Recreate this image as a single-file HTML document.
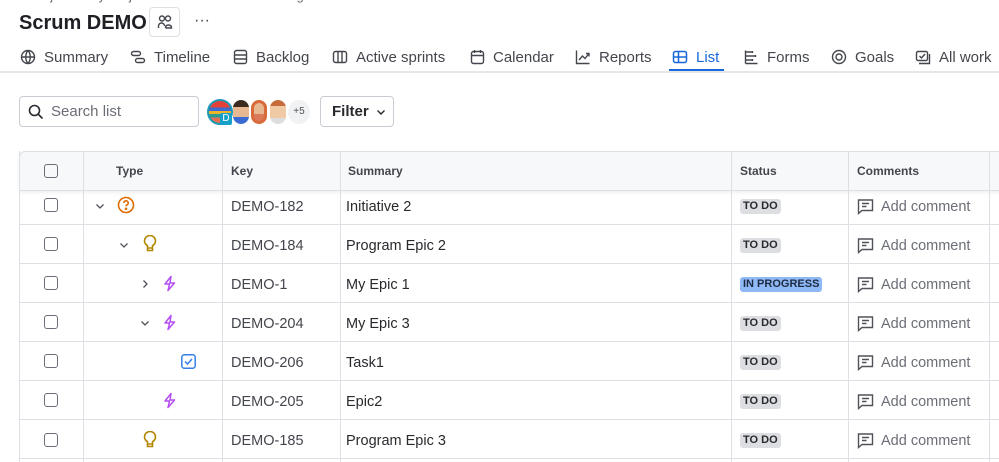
<!DOCTYPE html>
<html><head><meta charset="utf-8"><style>
*{box-sizing:border-box;margin:0;padding:0}
body{width:999px;height:462px;overflow:hidden;background:#fff;font-family:"Liberation Sans",sans-serif;color:#292a2e;position:relative}
.abs{position:absolute}
.tab{position:absolute;top:47px;height:20px;display:flex;align-items:center;font-size:15px;color:#44464d}
.tab svg{margin-right:8px}
.cb{position:absolute;left:44px;width:14px;height:14px;border:1.5px solid #6b6e76;border-radius:3px}
.vl{position:absolute;top:151px;bottom:0;width:1px;background:#dcdfe4}
.r{position:absolute;left:19px;width:980px;height:39px;border-bottom:1px solid #dcdfe4}
.c{position:absolute;top:2px;height:38px;display:flex;align-items:center;font-size:14.5px;white-space:nowrap}
.k{left:212px;color:#44464d}
.s{left:327px;color:#292a2e}
.st{left:721px;top:1px}
.cm{left:838px;color:#6b6e76;font-size:14.5px}
.cm svg{margin-right:7px;margin-top:-2px}
.lz{background:#dddee1;color:#292a2e;font-size:11px;font-weight:bold;padding:1px 3px;border-radius:3px;line-height:13px}
.ip{background:#8fb8f6;color:#1c2b41}
</style></head><body>
<div class="abs" style="left:30px;top:-12px;font-size:13px;color:#6b6e76">Projects / My Projects / Scrum DEMO / Backlog / and more items here</div>
<div class="abs" style="left:19px;top:12px;font-size:20px;font-weight:bold;color:#1f2025">Scrum DEMO</div>
<div class="abs" style="left:149px;top:7px;width:31px;height:30px;border:1px solid #dcdfe4;border-radius:4px;display:flex;align-items:center;justify-content:center">
<svg width="16" height="16" viewBox="0 0 16 16" fill="none" stroke="#44464d" stroke-width="1.4"><circle cx="5" cy="4.5" r="2.5"/><circle cx="11" cy="4.5" r="2.5"/><path d="M1.5 14v-2a3 3 0 0 1 6 0M8.5 14c0-2 1-3 3-3s3 1 3 3H8.5"/></svg></div>
<div class="abs" style="left:194px;top:12px;font-size:16px;color:#44464d">···</div>

<div class="tab" style="left:20px"><svg width="16" height="16" viewBox="0 0 16 16" fill="none" stroke="#44464d" stroke-width="1.4"><circle cx="8" cy="8" r="6.5"/><path d="M1.5 8h13M8 1.5c-3 3.5-3 9.5 0 13M8 1.5c3 3.5 3 9.5 0 13"/></svg>Summary</div>
<div class="tab" style="left:130px"><svg width="16" height="16" viewBox="0 0 16 16" fill="none" stroke="#44464d" stroke-width="1.4"><rect x="1.5" y="2.5" width="9" height="4" rx="2"/><rect x="5.5" y="9.5" width="9" height="4" rx="2"/></svg>Timeline</div>
<div class="tab" style="left:233px"><svg width="15" height="16" viewBox="0 0 15 16" fill="none" stroke="#44464d" stroke-width="1.4"><rect x="1.5" y="1.5" width="12" height="13" rx="2"/><path d="M1.5 6h12M1.5 10h12"/></svg>Backlog</div>
<div class="tab" style="left:332px"><svg width="16" height="16" viewBox="0 0 16 16" fill="none" stroke="#44464d" stroke-width="1.4"><rect x="1.5" y="2.5" width="13" height="11" rx="2"/><path d="M6 2.5v11M10 2.5v11"/></svg>Active sprints</div>
<div class="tab" style="left:470px"><svg width="15" height="16" viewBox="0 0 15 16" fill="none" stroke="#44464d" stroke-width="1.4"><rect x="1.5" y="2.5" width="12" height="12" rx="2"/><path d="M1.5 6.5h12M4.5 1v3M10.5 1v3"/></svg>Calendar</div>
<div class="tab" style="left:575px"><svg width="16" height="16" viewBox="0 0 16 16" fill="none" stroke="#44464d" stroke-width="1.4"><path d="M1.5 1.5v13h13M4 11l3.5-4 2.5 2.5L14 4.5M11 4.5h3v3"/></svg>Reports</div>
<div class="tab" style="left:672px;color:#1868db"><svg width="16" height="16" viewBox="0 0 16 16" fill="none" stroke="#1868db" stroke-width="1.5"><rect x="1.5" y="2.5" width="13" height="11" rx="2"/><path d="M1.5 8h13M6.5 2.5v11"/></svg>List</div>
<div class="abs" style="left:669px;top:69px;width:55px;height:3px;background:#1868db"></div>
<div class="tab" style="left:744px"><svg width="15" height="16" viewBox="0 0 15 16" fill="none" stroke="#44464d" stroke-width="1.4"><path d="M1.5 1.5v13M1.5 3h7M1.5 7h10M1.5 11h7M1.5 14.5h12M8.5 2v2M11.5 6v2M8.5 10v2"/></svg>Forms</div>
<div class="tab" style="left:831px"><svg width="16" height="16" viewBox="0 0 16 16" fill="none" stroke="#44464d" stroke-width="1.4"><circle cx="8" cy="8" r="6.5"/><circle cx="8" cy="8" r="3"/></svg>Goals</div>
<div class="tab" style="left:915px"><svg width="16" height="16" viewBox="0 0 16 16" fill="none" stroke="#44464d" stroke-width="1.4"><rect x="1.5" y="2.5" width="11" height="9" rx="1.5"/><path d="M4 14.5h10.5V5M4.5 7l2 2 3.5-4"/></svg>All work</div>
<div class="abs" style="left:0;top:71px;width:999px;height:2px;background:#e6e7ea"></div>

<div class="abs" style="left:19px;top:96px;width:180px;height:31px;border:1px solid #c9ccd2;border-radius:4px;display:flex;align-items:center;padding-left:8px;font-size:15px;color:#6b6e76">
<svg width="16" height="16" viewBox="0 0 16 16" fill="none" stroke="#292a2e" stroke-width="1.6" style="margin-right:7px"><circle cx="6.5" cy="6.5" r="5"/><path d="M10.5 10.5l4 4"/></svg>Search list</div>
<div class="abs" style="left:207px;top:99px;width:26px;height:26px;border-radius:50%;border:2px solid #1d9ab8;background:linear-gradient(#e3423a 0 30%,#3b6bd2 30% 45%,#f0b429 45% 60%,#2a9d8f 60% 75%,#e76f51 75%)"></div>
<div class="abs" style="left:220px;top:113px;width:12px;height:12px;background:#16a0c8;color:#fff;font-size:10px;text-align:center;line-height:12px;border-radius:2px">D</div>
<div class="abs" style="left:233px;top:100px;width:16px;height:24px;border-radius:8px;background:linear-gradient(#3b2a20 0 30%,#e8b892 30% 70%,#3b6bd2 70%)"></div>
<div class="abs" style="left:251px;top:100px;width:16px;height:24px;border-radius:8px;background:linear-gradient(#e8b892 0 60%,#d97a5a 60%);border:3px solid #d96a3a"></div>
<div class="abs" style="left:270px;top:100px;width:16px;height:24px;border-radius:8px;background:linear-gradient(#c66b3a 0 25%,#f0c9a5 25% 75%,#ddd 75%)"></div>
<div class="abs" style="left:288px;top:100px;width:22px;height:24px;border-radius:50%;background:#f1f2f4;font-size:10px;color:#505258;text-align:center;line-height:24px">+5</div>
<div class="abs" style="left:320px;top:96px;width:74px;height:31px;border:1px solid #c9ccd2;border-radius:4px;display:flex;align-items:center;padding-left:11px;font-size:15px;font-weight:bold;color:#292a2e">Filter<svg width="10" height="10" viewBox="0 0 10 10" fill="none" stroke="#292a2e" stroke-width="1.4" style="margin-left:7px"><path d="M1.5 3.5L5 7l3.5-3.5"/></svg></div>

<div class="abs" style="left:19px;top:151px;width:990px;height:40px;background:#f7f8f9;border:1px solid #dcdfe4;border-radius:6px 0 0 0;box-shadow:0 2px 3px rgba(0,0,0,.06)"></div>
<div class="vl" style="left:19px"></div><div class="vl" style="left:83px"></div><div class="vl" style="left:222px"></div><div class="vl" style="left:340px"></div><div class="vl" style="left:731px"></div><div class="vl" style="left:848px"></div><div class="vl" style="left:989px"></div>
<div class="cb" style="top:164px"></div>
<div class="abs" style="left:116px;top:164px;font-size:12px;font-weight:bold;color:#44464d">Type</div>
<div class="abs" style="left:231px;top:164px;font-size:12px;font-weight:bold;color:#44464d">Key</div>
<div class="abs" style="left:348px;top:164px;font-size:12px;font-weight:bold;color:#44464d">Summary</div>
<div class="abs" style="left:740px;top:164px;font-size:12px;font-weight:bold;color:#44464d">Status</div>
<div class="abs" style="left:857px;top:164px;font-size:12px;font-weight:bold;color:#44464d">Comments</div>

<div class="r" style="top:186px"><div class="c k">DEMO-182</div><div class="c s">Initiative 2</div><div class="c st"><span class="lz">TO DO</span></div><div class="c cm"><svg width="17" height="17" viewBox="0 0 17 17" fill="none" stroke="#505258" stroke-width="1.4"><path d="M1.5 2h14v10.5H5L1.5 15.5z"/><path d="M5 5.5h7M5 8.5h4.5"/></svg>Add comment</div></div>
<div class="r" style="top:225px"><div class="c k">DEMO-184</div><div class="c s">Program Epic 2</div><div class="c st"><span class="lz">TO DO</span></div><div class="c cm"><svg width="17" height="17" viewBox="0 0 17 17" fill="none" stroke="#505258" stroke-width="1.4"><path d="M1.5 2h14v10.5H5L1.5 15.5z"/><path d="M5 5.5h7M5 8.5h4.5"/></svg>Add comment</div></div>
<div class="r" style="top:264px"><div class="c k">DEMO-1</div><div class="c s">My Epic 1</div><div class="c st"><span class="lz ip">IN PROGRESS</span></div><div class="c cm"><svg width="17" height="17" viewBox="0 0 17 17" fill="none" stroke="#505258" stroke-width="1.4"><path d="M1.5 2h14v10.5H5L1.5 15.5z"/><path d="M5 5.5h7M5 8.5h4.5"/></svg>Add comment</div></div>
<div class="r" style="top:303px"><div class="c k">DEMO-204</div><div class="c s">My Epic 3</div><div class="c st"><span class="lz">TO DO</span></div><div class="c cm"><svg width="17" height="17" viewBox="0 0 17 17" fill="none" stroke="#505258" stroke-width="1.4"><path d="M1.5 2h14v10.5H5L1.5 15.5z"/><path d="M5 5.5h7M5 8.5h4.5"/></svg>Add comment</div></div>
<div class="r" style="top:342px"><div class="c k">DEMO-206</div><div class="c s">Task1</div><div class="c st"><span class="lz">TO DO</span></div><div class="c cm"><svg width="17" height="17" viewBox="0 0 17 17" fill="none" stroke="#505258" stroke-width="1.4"><path d="M1.5 2h14v10.5H5L1.5 15.5z"/><path d="M5 5.5h7M5 8.5h4.5"/></svg>Add comment</div></div>
<div class="r" style="top:381px"><div class="c k">DEMO-205</div><div class="c s">Epic2</div><div class="c st"><span class="lz">TO DO</span></div><div class="c cm"><svg width="17" height="17" viewBox="0 0 17 17" fill="none" stroke="#505258" stroke-width="1.4"><path d="M1.5 2h14v10.5H5L1.5 15.5z"/><path d="M5 5.5h7M5 8.5h4.5"/></svg>Add comment</div></div>
<div class="r" style="top:420px"><div class="c k">DEMO-185</div><div class="c s">Program Epic 3</div><div class="c st"><span class="lz">TO DO</span></div><div class="c cm"><svg width="17" height="17" viewBox="0 0 17 17" fill="none" stroke="#505258" stroke-width="1.4"><path d="M1.5 2h14v10.5H5L1.5 15.5z"/><path d="M5 5.5h7M5 8.5h4.5"/></svg>Add comment</div></div>

<div class="cb" style="top:198px"></div><div class="cb" style="top:237px"></div><div class="cb" style="top:276px"></div><div class="cb" style="top:315px"></div><div class="cb" style="top:354px"></div><div class="cb" style="top:393px"></div><div class="cb" style="top:433px"></div>

<svg class="abs" style="left:95px;top:201px" width="10" height="10" viewBox="0 0 10 10" fill="none" stroke="#505258" stroke-width="1.3"><path d="M1.5 3.5L5 7l3.5-3.5"/></svg>
<svg class="abs" style="left:117px;top:196px" width="18" height="18" viewBox="0 0 18 18" fill="none" stroke="#e06c00" stroke-width="1.6"><circle cx="9" cy="9" r="7.5"/><path d="M6.8 7a2.2 2.2 0 1 1 3 2c-.6.3-.8.7-.8 1.3"/><circle cx="9" cy="12.8" r=".5" fill="#e06c00"/></svg>
<svg class="abs" style="left:119px;top:240px" width="10" height="10" viewBox="0 0 10 10" fill="none" stroke="#505258" stroke-width="1.3"><path d="M1.5 3.5L5 7l3.5-3.5"/></svg>
<svg class="abs" style="left:142px;top:235px" width="16" height="18" viewBox="0 0 16 18" fill="none" stroke="#b38600" stroke-width="1.6"><path d="M5.5 13v-2.3C3.5 9.5 2.5 8 2.5 6a5.5 5.5 0 0 1 11 0c0 2-1 3.5-3 4.7V13zM5.5 13v2.5h5V13"/></svg>
<svg class="abs" style="left:140px;top:279px" width="10" height="10" viewBox="0 0 10 10" fill="none" stroke="#505258" stroke-width="1.3"><path d="M3.5 1.5L7 5l-3.5 3.5"/></svg>
<svg class="abs" style="left:162px;top:275px" width="15" height="17" viewBox="0 0 15 17" fill="none" stroke="#b44df3" stroke-width="1.5" stroke-linejoin="round"><path d="M9 1.5L3 9h4.5L6 15.5 12.5 8H8z"/></svg>
<svg class="abs" style="left:140px;top:318px" width="10" height="10" viewBox="0 0 10 10" fill="none" stroke="#505258" stroke-width="1.3"><path d="M1.5 3.5L5 7l3.5-3.5"/></svg>
<svg class="abs" style="left:162px;top:314px" width="15" height="17" viewBox="0 0 15 17" fill="none" stroke="#b44df3" stroke-width="1.5" stroke-linejoin="round"><path d="M9 1.5L3 9h4.5L6 15.5 12.5 8H8z"/></svg>
<svg class="abs" style="left:181px;top:354px" width="15" height="15" viewBox="0 0 15 15" fill="none" stroke="#357de8" stroke-width="1.5"><rect x=".8" y=".8" width="13.4" height="13.4" rx="2.5"/><path d="M4 7.5l2.5 2.5 4.5-5"/></svg>
<svg class="abs" style="left:162px;top:392px" width="15" height="17" viewBox="0 0 15 17" fill="none" stroke="#b44df3" stroke-width="1.5" stroke-linejoin="round"><path d="M9 1.5L3 9h4.5L6 15.5 12.5 8H8z"/></svg>
<svg class="abs" style="left:142px;top:431px" width="16" height="18" viewBox="0 0 16 18" fill="none" stroke="#b38600" stroke-width="1.6"><path d="M5.5 13v-2.3C3.5 9.5 2.5 8 2.5 6a5.5 5.5 0 0 1 11 0c0 2-1 3.5-3 4.7V13zM5.5 13v2.5h5V13"/></svg>
</body></html>
